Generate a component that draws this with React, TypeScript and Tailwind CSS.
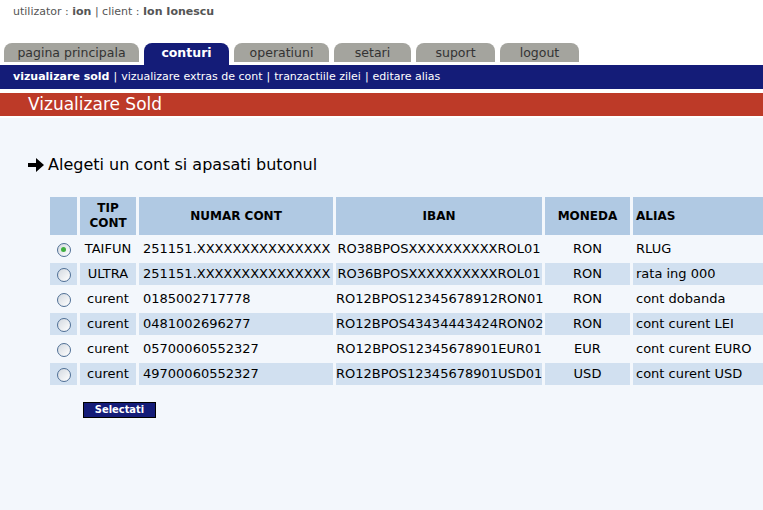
import React from 'react';

const tabs = ['pagina principala', 'conturi', 'operatiuni', 'setari', 'suport', 'logout'];
const tabWidths = ['w-[135px]', 'w-[85px]', 'w-[95px]', 'w-[77px]', 'w-[79px]', 'w-[79px]'];

const accounts = [
  { tip: 'TAIFUN', numar: '251151.XXXXXXXXXXXXXXX', iban: 'RO38BPOSXXXXXXXXXXROL01', moneda: 'RON', alias: 'RLUG' },
  { tip: 'ULTRA', numar: '251151.XXXXXXXXXXXXXXX', iban: 'RO36BPOSXXXXXXXXXXROL01', moneda: 'RON', alias: 'rata ing 000' },
  { tip: 'curent', numar: '0185002717778', iban: 'RO12BPOS12345678912RON01', moneda: 'RON', alias: 'cont dobanda' },
  { tip: 'curent', numar: '0481002696277', iban: 'RO12BPOS43434443424RON02', moneda: 'RON', alias: 'cont curent LEI' },
  { tip: 'curent', numar: '05700060552327', iban: 'RO12BPOS12345678901EUR01', moneda: 'EUR', alias: 'cont curent EURO' },
  { tip: 'curent', numar: '49700060552327', iban: 'RO12BPOS12345678901USD01', moneda: 'USD', alias: 'cont curent USD' },
];

function Radio({ checked }: { checked?: boolean }) {
  return (
    <span className="inline-flex h-[14px] w-[14px] items-center justify-center rounded-full border border-[#4f6f95] bg-gradient-to-br from-[#d3d9e0] to-white align-middle">
      {checked && <span className="h-[5px] w-[5px] rounded-full bg-[#3fae3f]" />}
    </span>
  );
}

function Arrow() {
  return (
    <svg width="18" height="16" viewBox="0 0 18 16" className="mr-[3px]">
      <path d="M1 6 H9 V1 L17 8 L9 15 V10 H1 Z" fill="#000" />
    </svg>
  );
}

export default function App() {
  return (
    <div className="min-h-[510px] w-[763px] overflow-hidden bg-white text-black" style={{ fontFamily: '"DejaVu Sans", Verdana, sans-serif' }}>
      <div className="px-[13px] pt-[5px] text-[11px] leading-[14px] text-[#555]">
        utilizator : <b>ion</b> | client : <b>Ion Ionescu</b>
      </div>

      {/* tabs */}
      <div className="mt-[24px] flex gap-[5px] pl-[4px]">
        {tabs.map((t, i) =>
          t === 'conturi' ? (
            <div key={t} className={`${tabWidths[i]} flex h-[22px] items-start justify-center rounded-t-[8px] bg-[#141c78] pt-[1px] text-[12.5px] font-bold leading-[17px] text-white`}>
              {t}
            </div>
          ) : (
            <div key={t} className={`${tabWidths[i]} mb-[3px] flex h-[19px] items-center justify-center rounded-t-[8px] bg-[#a4a49e] text-[12.5px] leading-[17px] text-[#333]`}>
              {t}
            </div>
          )
        )}
      </div>
      <div className="flex h-[24px] items-center bg-[#141c78] px-[13px] text-[11px] text-white">
        <b>vizualizare sold</b>
        <span className="mx-[4px]">|</span>vizualizare extras de cont
        <span className="mx-[4px]">|</span>tranzactiile zilei
        <span className="mx-[4px]">|</span>editare alias
      </div>
      <div className="mt-[4px] flex h-[23px] items-center bg-[#bd3a28] pl-[28px] text-[17px] text-white">Vizualizare Sold</div>

      <div className="mt-[2px] min-h-[392px] bg-[#f3f7fc] pt-[38px]">
        <div className="flex items-center pl-[27px] text-[16px] leading-[18px]">
          <Arrow />
          Alegeti un cont si apasati butonul
        </div>

        <table className="ml-[47px] mt-[20px] w-[720px] table-fixed border-separate border-spacing-[3px] text-[13px] leading-[16px]">
          <colgroup>
            <col className="w-[27px]" />
            <col className="w-[56px]" />
            <col className="w-[194px]" />
            <col className="w-[206px]" />
            <col className="w-[85px]" />
            <col className="w-[140px]" />
          </colgroup>
          <thead>
            <tr className="bg-[#b0c9e3] text-[12px] font-bold leading-[15px]">
              <th className="h-[38px] p-0" />
              <th className="p-0 text-center">TIP<br />CONT</th>
              <th className="p-0 text-center">NUMAR CONT</th>
              <th className="p-0 text-center">IBAN</th>
              <th className="p-0 text-center">MONEDA</th>
              <th className="p-0 pl-[3px] text-left">ALIAS</th>
            </tr>
          </thead>
          <tbody>
            {accounts.map((a, i) => (
              <tr key={i} className={i % 2 === 1 ? 'bg-[#d1e0f0]' : ''}>
                <td className="h-[22px] p-0 text-center align-middle">
                  <Radio checked={i === 0} />
                </td>
                <td className="whitespace-nowrap p-0 text-center">{a.tip}</td>
                <td className="whitespace-nowrap p-0 pl-[4px]">{a.numar}</td>
                <td className="whitespace-nowrap p-0 text-center">{a.iban}</td>
                <td className="p-0 text-center">{a.moneda}</td>
                <td className="whitespace-nowrap p-0 pl-[3px]">{a.alias}</td>
              </tr>
            ))}
          </tbody>
        </table>

        <button className="ml-[83px] mt-[14px] flex h-[16px] w-[73px] items-center justify-center border border-black bg-[#141c78] text-[11px] font-bold text-white" style={{ fontFamily: '"DejaVu Sans Condensed", "DejaVu Sans", sans-serif' }}>
          Selectati
        </button>
      </div>
    </div>
  );
}
